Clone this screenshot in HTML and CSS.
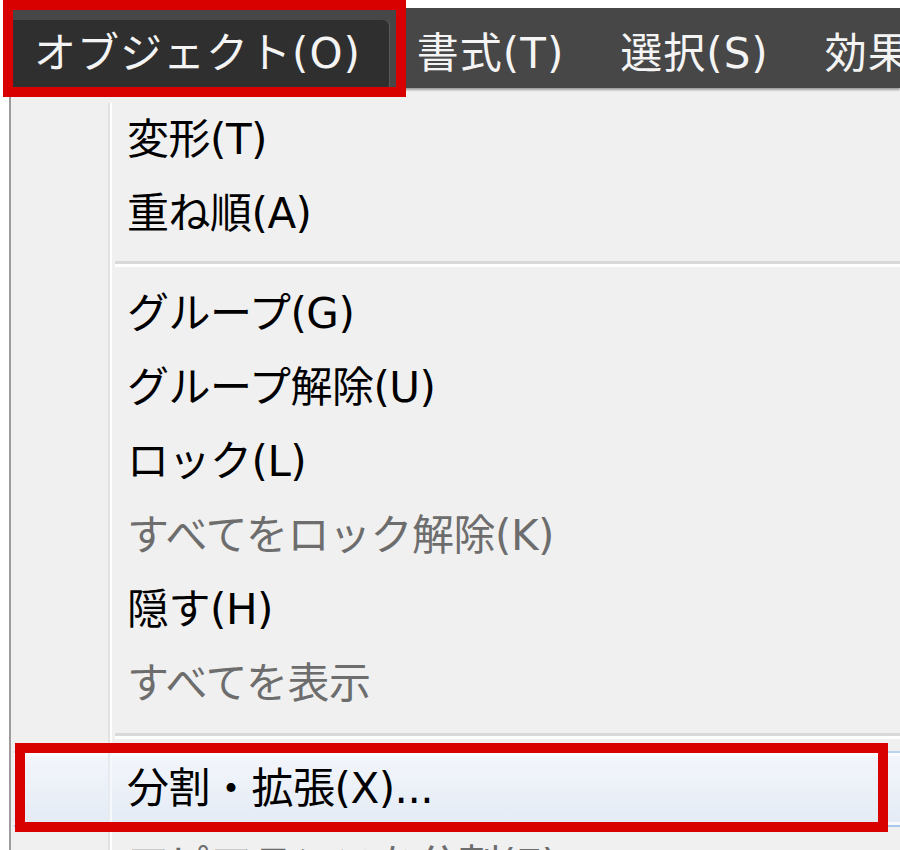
FILE: index.html
```html
<!DOCTYPE html>
<html lang="ja">
<head>
<meta charset="utf-8">
<title>オブジェクトメニュー</title>
<link rel="stylesheet" href="styles.css">
</head>
<body>
<div class="screen">
  <div class="menubar">
    <div class="mitem active">オブジェクト(O)</div>
    <div class="mitem">書式(T)</div>
    <div class="mitem">選択(S)</div>
    <div class="mitem">効果(C)</div>
  </div>
  <div class="dropdown">
    <div class="row"><div class="gut"></div><div class="label">変形(T)</div></div>
    <div class="row"><div class="gut"></div><div class="label">重ね順(A)</div></div>
    <div class="sep"><div class="gut"></div><div class="line"></div></div>
    <div class="row"><div class="gut"></div><div class="label">グループ(G)</div></div>
    <div class="row"><div class="gut"></div><div class="label">グループ解除(U)</div></div>
    <div class="row"><div class="gut"></div><div class="label">ロック(L)</div></div>
    <div class="row dis"><div class="gut"></div><div class="label">すべてをロック解除(K)</div></div>
    <div class="row"><div class="gut"></div><div class="label">隠す(H)</div></div>
    <div class="row dis"><div class="gut"></div><div class="label">すべてを表示</div></div>
    <div class="sep sep2"><div class="gut"></div><div class="line"></div></div>
    <div class="row hl"><div class="gut"></div><div class="label">分割・拡張(X)...</div></div>
    <div class="row dis"><div class="gut"></div><div class="label">アピアランスを分割(E)</div></div>
  </div>
  <div class="mark mark-top"></div>
  <div class="mark mark-item"></div>
</div>
</body>
</html>
```

FILE: styles.css
```css
html, body {
  margin: 0;
  padding: 0;
  background: #ffffff;
}

.screen {
  position: relative;
  width: 900px;
  height: 850px;
  overflow: hidden;
  font-family: "DejaVu Sans", "Noto Sans CJK JP", sans-serif;
  font-size: 42px;
  letter-spacing: -0.5px;
}

.menubar {
  display: flex;
  align-items: flex-end;
  margin-top: 8px;
  margin-left: 6px;
  height: 80px;
  background: #474747;
  box-shadow: 0 2px 2px rgba(0, 0, 0, 0.35);
  position: relative;
  z-index: 1;
}

.mitem {
  height: 67px;
  padding: 0 28px;
  margin-bottom: 1px;
  color: #f4f4f4;
  line-height: 68px;
  letter-spacing: 1px;
  white-space: nowrap;
}

.mitem.active {
  background: #2f2f2f;
  border-radius: 6px 6px 0 0;
  box-shadow: 1px 0 0 #5a5a5a;
}

.dropdown {
  margin-left: 9px;
  border-left: 2px solid #9c9c9c;
  background: #f0f0f0;
  padding-top: 15px;
  height: 800px;
}

.row, .sep {
  display: flex;
}

.gut {
  width: 97px;
  flex: none;
  border-right: 2px solid #e2e2e2;
}

.row {
  height: 74px;
}

.label {
  flex: 1;
  border-left: 2px solid #ffffff;
  padding-left: 15px;
  line-height: 74px;
  color: #000000;
  white-space: nowrap;
}

.row.dis .label {
  color: #6d6d6d;
}

.sep {
  height: 26px;
}

.sep2 {
  height: 30px;
}

.sep .line {
  flex: 1;
  border-left: 2px solid #ffffff;
  padding-left: 3px;
  display: flex;
  flex-direction: column;
  justify-content: center;
}

.sep .line::before {
  content: "";
  display: block;
  height: 3px;
  background: #d9d9d9;
}

.sep .line::after {
  content: "";
  display: block;
  height: 3px;
  background: #ffffff;
}

.row.hl {
  margin-left: 3px;
  height: 72px;
  margin-top: 0;
  margin-bottom: 2px;
  border-top: 2px solid #bcd3ef;
  border-bottom: 2px solid #aac7ec;
  background: linear-gradient(#f3f6fb, #e4ebf5);
  box-shadow: inset 0 3px 0 #fafcff, inset 0 -3px 0 #f7f9fd;
}

.row.hl .gut {
  width: 94px;
  border-right-color: #e6ebf2;
}

.row.hl .label {
  line-height: 72px;
  border-left-color: #f6f8fc;
}

.mark {
  position: absolute;
  border: 10px solid #d90000;
  box-sizing: border-box;
  z-index: 2;
}

.mark-top {
  left: 3px;
  top: 0;
  width: 403px;
  height: 97px;
}

.mark-item {
  left: 15px;
  top: 743px;
  width: 873px;
  height: 89px;
}
```
